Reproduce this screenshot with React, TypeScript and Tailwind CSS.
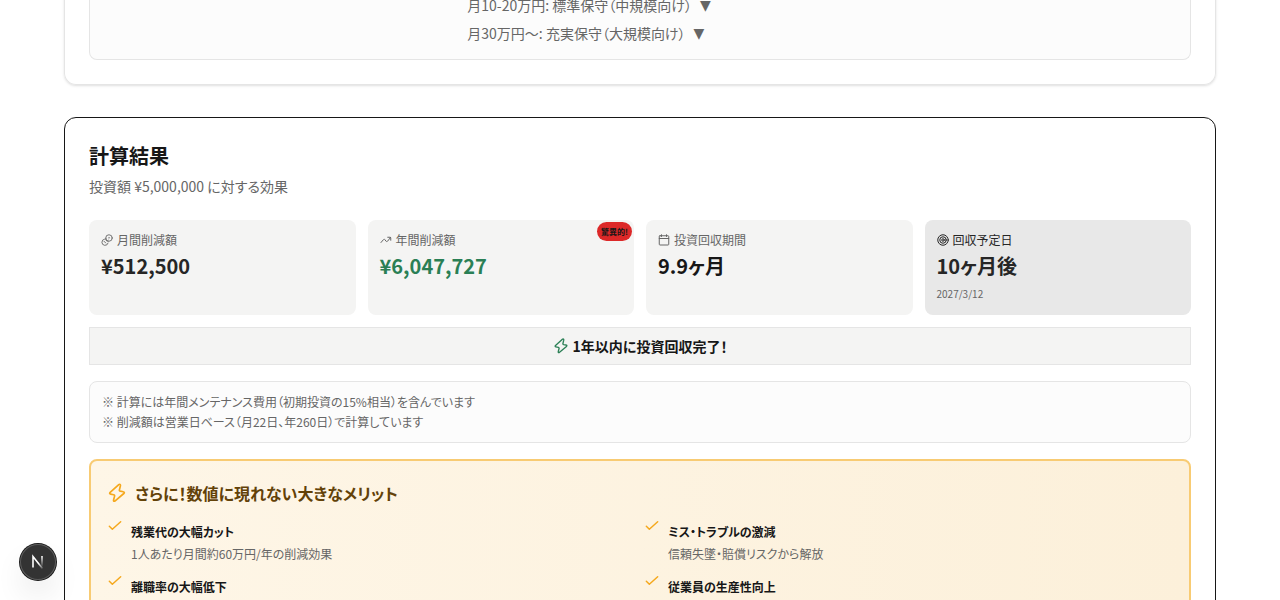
import type { ReactNode } from 'react';

type IconProps = { className?: string };

function Icon({ className, children, strokeWidth = 2 }: IconProps & { children: ReactNode; strokeWidth?: number }) {
  return (
    <svg
      viewBox="0 0 24 24"
      fill="none"
      stroke="currentColor"
      strokeWidth={strokeWidth}
      strokeLinecap="round"
      strokeLinejoin="round"
      className={`shrink-0 ${className ?? ''}`}
      aria-hidden="true"
    >
      {children}
    </svg>
  );
}

const CoinsIcon = ({ className }: IconProps) => (
  <Icon className={className} strokeWidth={1.8}>
    <circle cx="16" cy="8" r="6.5" />
    <path d="M7 10.200a6.300 6.300 0 1 0 7.200 8" />
    <path d="M9.500 8.500c-1.200 3.200.8 6.300 5 6" />
    <path d="M15.500 6.500l1.500 1.500-1.500 1.500M6 14.500l3.500 3.500" />
  </Icon>
);

const TrendIcon = ({ className }: IconProps) => (
  <Icon className={className}>
    <path d="M2 17l4.600-5.400c1.200-1.400 2.400-1.500 3.500 0l1.600 2.400c1.100 1.600 2.500 1.600 3.700.1L21 7" />
    <path d="M15.500 6.500H20c1.200 0 1.500.4 1.500 1.500v4.500" />
  </Icon>
);

const CalendarIcon = ({ className }: IconProps) => (
  <Icon className={className}>
    <rect x="2.500" y="3.500" width="19" height="18.500" rx="1.500" />
    <path d="M7 1.500V5M17 1.500V5M2.500 9h19" />
  </Icon>
);

const TargetIcon = ({ className }: IconProps) => (
  <Icon className={className}>
    <circle cx="12" cy="12" r="10.500" />
    <circle cx="12" cy="12" r="6.500" />
    <circle cx="12" cy="12" r="2.500" />
  </Icon>
);

const ZapIcon = ({ className }: IconProps) => (
  <Icon className={className}>
    <path d="M14.100 2 3.800 11.300c-1 .9-.6 1.900.6 2.100l3.600.7c.9.2 1.300.8 1.100 1.600l-1.200 4.700c-.3 1.500.8 2 1.900 1L20.200 12.600c1-.9.6-1.900-.6-2.100l-3.600-.7c-.9-.2-1.300-.8-1.100-1.600l1.200-4.900c.3-1.500-.9-2.300-2-1.300z" />
  </Icon>
);

const CheckIcon = ({ className }: IconProps) => (
  <Icon className={className} strokeWidth={2.2}>
    <path d="M3.500 14l4.500 4.500L20.500 7" />
  </Icon>
);

const plans = ['月10-20万円: 標準保守（中規模向け）', '月30万円〜: 充実保守（大規模向け）'];

const stats = [
  { label: '月間削減額', value: '¥512,500', icon: CoinsIcon, color: 'text-[#262626]' },
  { label: '年間削減額', value: '¥6,047,727', icon: TrendIcon, color: 'text-[#2a7f55]', badge: '驚異的!' },
  { label: '投資回収期間', value: '9.9ヶ月', icon: CalendarIcon, color: 'text-[#171717]' },
  { label: '回収予定日', value: '10ヶ月後', icon: TargetIcon, color: 'text-[#262626]', date: '2027/3/12' },
];

const merits = [
  { title: '残業代の大幅カット', text: '1人あたり月間約60万円/年の削減効果' },
  { title: 'ミス・トラブルの激減', text: '信頼失墜・賠償リスクから解放' },
  { title: '離職率の大幅低下', text: '採用・教育コストの削減' },
  { title: '従業員の生産性向上', text: '本来の業務に集中できる環境' },
];

export default function App() {
  return (
    <div className="h-screen overflow-hidden bg-white font-['Noto_Sans_CJK_JP',sans-serif] text-[#171717] [font-feature-settings:'palt']">
      <main className="-mt-[5px] space-y-8 px-4 sm:px-16">
        {/* Maintenance plans */}
        <section className="rounded-b-xl border border-t-0 border-[#e5e5e5] px-6 pb-6 shadow-sm">
          <div className="grid grid-cols-3 gap-4 rounded-b-lg border border-t-0 border-[#e5e5e5] bg-[#fcfcfc] px-4 pb-4">
            <ul className="col-start-2 space-y-2 text-sm whitespace-nowrap text-[#666666]">
              {plans.map((plan) => (
                <li key={plan} className="flex gap-2">
                  {plan}
                  <span className="font-['DejaVu_Sans',sans-serif]">▼</span>
                </li>
              ))}
            </ul>
          </div>
        </section>

        {/* Result */}
        <section className="rounded-xl border border-[#171717] p-6">
          <h2 className="text-xl leading-7 font-bold">計算結果</h2>
          <p className="mt-1.5 text-sm text-[#666666]">投資額 ¥5,000,000 に対する効果</p>

          <div className="mt-6 grid grid-cols-4 gap-3">
            {stats.map(({ label, value, icon: StatIcon, color, badge, date }) => (
              <div key={label} className={`relative rounded-lg p-3 ${date ? 'bg-[#e8e8e8]' : 'bg-[#f4f4f3]'}`}>
                <div className={`flex items-center gap-1 text-xs ${date ? 'text-[#262626]' : 'text-[#666666]'}`}>
                  <StatIcon className="size-3" />
                  {label}
                </div>
                <div className={`mt-1 text-xl leading-7 font-bold ${color}`}>{value}</div>
                {date && <div className="mt-1 text-[10px] leading-[19px] text-[#666666]">{date}</div>}
                {badge && (
                  <span className="absolute top-0.5 right-0.5 rounded-full bg-[#dc2828] px-1 text-[8px] leading-[19px] font-bold">
                    {badge}
                  </span>
                )}
              </div>
            ))}
          </div>

          <div className="mt-3 flex items-center justify-center gap-1 border border-[#e5e5e5] bg-[#f4f4f3] p-2 text-sm font-bold">
            <ZapIcon className="size-4 text-[#2a7f55]" />
            1年以内に投資回収完了！
          </div>

          <div className="mt-4 space-y-1 rounded-lg border border-[#e5e5e5] bg-[#fcfcfc] p-3 text-xs text-[#666666]">
            <p>※ 計算には年間メンテナンス費用（初期投資の15%相当）を含んでいます</p>
            <p>※ 削減額は営業日ベース（月22日、年260日）で計算しています</p>
          </div>

          {/* Merits */}
          <div className="mt-4 rounded-lg border-2 border-[#f8cb73] bg-linear-to-r from-[#fef6e7] to-[#fcf0da] p-4">
            <h3 className="mb-2 flex items-center gap-2 text-base leading-8 font-bold text-[#634208]">
              <ZapIcon className="size-5 text-[#f5a81c]" />
              さらに！数値に現れない大きなメリット
            </h3>
            <ul className="grid grid-cols-2 gap-2">
              {merits.map((m) => (
                <li key={m.title} className="flex gap-2 text-xs">
                  <CheckIcon className="size-4 text-[#f5a81c]" />
                  <div className="pt-1">
                    <p className="leading-[22px] font-bold">{m.title}</p>
                    <p className="leading-[21px] text-[#666666]">{m.text}</p>
                  </div>
                </li>
              ))}
            </ul>
          </div>
        </section>
      </main>

      {/* Dev tools indicator */}
      <button
        aria-label="Open Next.js Dev Tools"
        className="fixed bottom-5 left-5 flex size-9 items-center justify-center rounded-full bg-[#333333] shadow-[0_0_0_1px_#171717,inset_0_0_0_1px_#5c5c5c,0_16px_32px_-8px_rgba(0,0,0,0.24)]"
      >
        <svg width="16" height="16" viewBox="0 0 16 16" fill="none" aria-hidden="true">
          <defs>
            <linearGradient id="diag" x1="9" y1="9" x2="14" y2="15" gradientUnits="userSpaceOnUse">
              <stop stopColor="#fff" />
              <stop offset="1" stopColor="#fff" stopOpacity="0" />
            </linearGradient>
            <linearGradient id="stem" x1="12" y1="2" x2="12" y2="13" gradientUnits="userSpaceOnUse">
              <stop stopColor="#fff" />
              <stop offset="1" stopColor="#fff" stopOpacity="0" />
            </linearGradient>
          </defs>
          <path d="M3 13.500V2.500l9.500 12" stroke="url(#diag)" strokeWidth="1.600" />
          <path d="M12 2v11.500" stroke="url(#stem)" strokeWidth="1.600" />
        </svg>
      </button>
    </div>
  );
}
